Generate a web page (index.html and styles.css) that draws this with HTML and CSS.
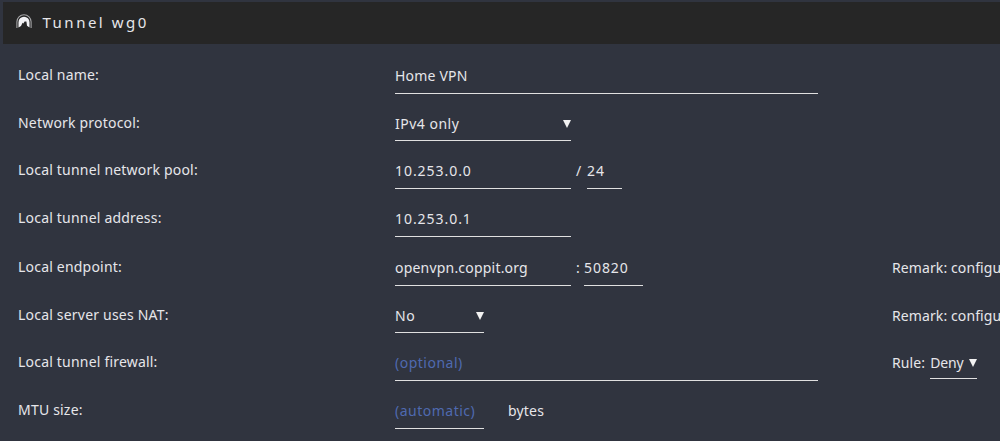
FILE: index.html
```
<!DOCTYPE html>
<html lang="en">
<head>
    <meta charset="UTF-8">
    <meta name="viewport" content="width=device-width, initial-scale=1.0">
    <title>Tunnel wg0</title>
    <link rel="stylesheet" href="styles.css">
</head>
<body>
    <div class="title">
        <svg class="icon" viewBox="0 0 16 15" width="16" height="15">
            <path d="M.9 14V7.8a7.1 7.1 0 0 1 14.2 0V14" fill="none" stroke="#a5a5a7" stroke-width="1.1"/>
            <path d="M2.5 13.6V8.2a5.5 5.5 0 0 1 11 0v5.4L11 11.8 10.4 7.4H8.6L7.4 9.4 6.6 8.8 5 12z" fill="#f2f2f5"/>
        </svg>
        <h1>Tunnel wg0</h1>
    </div>

    <form>
        <div class="row">
            <label for="name">Local name:</label>
            <div class="field"><input type="text" id="name" class="wide" value="Home VPN"></div>
        </div>
        <div class="row short">
            <label for="protocol">Network protocol:</label>
            <div class="field">
                <div class="select medium">
                    <select id="protocol"><option>IPv4 only</option><option>IPv6 only</option></select>
                </div>
            </div>
        </div>
        <div class="row">
            <label for="pool">Local tunnel network pool:</label>
            <div class="field">
                <input type="text" id="pool" class="medium number" value="10.253.0.0">
                <span class="slash">/</span>
                <input type="text" class="mask number" value="24">
            </div>
        </div>
        <div class="row">
            <label for="address">Local tunnel address:</label>
            <div class="field"><input type="text" id="address" class="medium number" value="10.253.0.1"></div>
        </div>
        <div class="row">
            <label for="endpoint">Local endpoint:</label>
            <div class="field">
                <input type="text" id="endpoint" class="medium" value="openvpn.coppit.org">
                <span class="colon">:</span>
                <input type="text" class="port number" value="50820">
            </div>
            <div class="remark">Remark: configure</div>
        </div>
        <div class="row short">
            <label for="nat">Local server uses NAT:</label>
            <div class="field">
                <div class="select small">
                    <select id="nat"><option>No</option><option>Yes</option></select>
                </div>
            </div>
            <div class="remark">Remark: configure</div>
        </div>
        <div class="row">
            <label for="firewall">Local tunnel firewall:</label>
            <div class="field"><input type="text" id="firewall" class="wide" placeholder="(optional)"></div>
            <div class="remark rule">
                <span>Rule:</span>
                <div class="select deny">
                    <select><option>Deny</option><option>Allow</option></select>
                </div>
            </div>
        </div>
        <div class="row">
            <label for="mtu">MTU size:</label>
            <div class="field">
                <input type="text" id="mtu" class="small" placeholder="(automatic)">
                <span class="unit">bytes</span>
            </div>
        </div>
    </form>
</body>
</html>
```
FILE: styles.css
```
* {
    box-sizing: border-box;
}

body {
    margin: 0;
    height: 441px;
    overflow: hidden;
    background-color: #30343f;
    color: #e6e6ea;
    font-family: "Noto Sans", sans-serif;
    font-size: 14px;
    line-height: 20px;
    letter-spacing: 0.2px;
}

.title {
    display: flex;
    align-items: center;
    gap: 11px;
    height: 42px;
    margin: 2px 0 0 3px;
    padding: 0 0 4px 13px;
    background-color: #262626;
}

.icon {
    margin-left: -0.5px;
}

h1 {
    margin: 0;
    padding-top: 2px;
    font-size: 15px;
    font-weight: normal;
    letter-spacing: 2.5px;
}

form {
    padding: 8px 0 0 18px;
}

.row {
    display: grid;
    grid-template-columns: 377px 497px minmax(0, 1fr);
    height: 48.2px;
}

.short {
    height: 47px;
}

label, .remark {
    padding-top: 13px;
    white-space: nowrap;
}

.remark {
    padding-top: 14px;
    overflow: hidden;
    letter-spacing: 0.1px;
}

.field, .rule {
    display: flex;
    align-items: flex-start;
}

.field {
    padding-top: 12px;
}

.rule {
    gap: 5px;
    padding-top: 12px;
}

.rule span {
    padding-top: 2px;
}

input, select {
    height: 30px;
    padding: 0 0 6px;
    border: none;
    border-radius: 0;
    outline: none;
    background: transparent;
    color: inherit;
    font: inherit;
    letter-spacing: inherit;
}

input, .select {
    height: 30px;
    border-bottom: 1px solid #e0e0e0;
}

input::placeholder {
    color: #4f6ab0;
    opacity: 1;
    letter-spacing: 0.5px;
}

.number {
    letter-spacing: 0.95px;
}

.select {
    position: relative;
    height: 29px;
    letter-spacing: 0.5px;
}

.select select {
    width: 100%;
    height: 29px;
    padding-bottom: 5px;
    appearance: none;
}

/* dropdown arrow */
.select::after {
    content: "";
    position: absolute;
    right: 0;
    top: 8px;
    border: 4px solid transparent;
    border-top: 8px solid #f2f2f2;
    border-bottom: none;
}

.wide { width: 423px; }
.medium { width: 176px; }
.small { width: 89px; }
.mask { width: 35px; }
.port { width: 59px; }

.deny {
    width: 47px;
    height: 28px;
    letter-spacing: -0.1px;
}

.deny select {
    height: 28px;
    padding-bottom: 4px;
}

.slash, .colon, .unit {
    padding-top: 2px;
}

.slash {
    width: 16px;
    padding-left: 5px;
}

.colon {
    width: 13px;
    padding-left: 5px;
}

.unit {
    padding-left: 24px;
}
```
